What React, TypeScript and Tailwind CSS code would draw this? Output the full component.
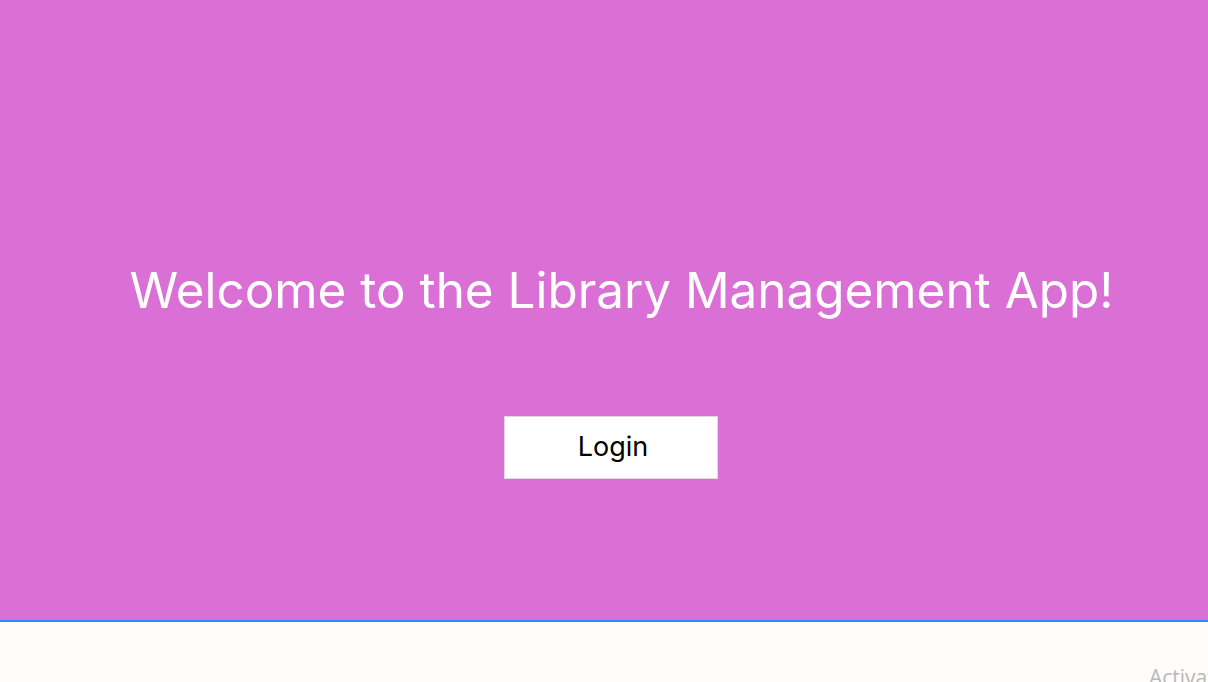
import React from 'react';

const App: React.FC = () => {
  return (
    <div className="flex h-[682px] w-full flex-col overflow-hidden bg-[#fefdfb]" style={{ fontFamily: 'Inter, "Noto Sans", sans-serif' }}>
      <div className="flex h-[620px] flex-col items-center bg-[#da70d6]">
        <h1 className="mt-[258px] pl-[35px] text-[49.4px] font-normal leading-[64px] text-white">
          Welcome to the Library Management App!
        </h1>
        <button className="ml-[14px] mt-[94px] h-[63px] w-[214px] border border-[#e5d5e4] bg-white text-[27px] text-black">
          <span className="pl-[4px]">Login</span>
        </button>
      </div>
      <div className="h-[2px] bg-[#1e90ff]" />
      <div className="relative flex-1">
        <span
          className="absolute left-[1149px] top-[40px] text-[21px] text-[#b8b8b8]"
          style={{ fontFamily: '"Open Sans", "Noto Sans", sans-serif' }}
        >
          Activate Windows
        </span>
      </div>
    </div>
  );
};

export default App;
